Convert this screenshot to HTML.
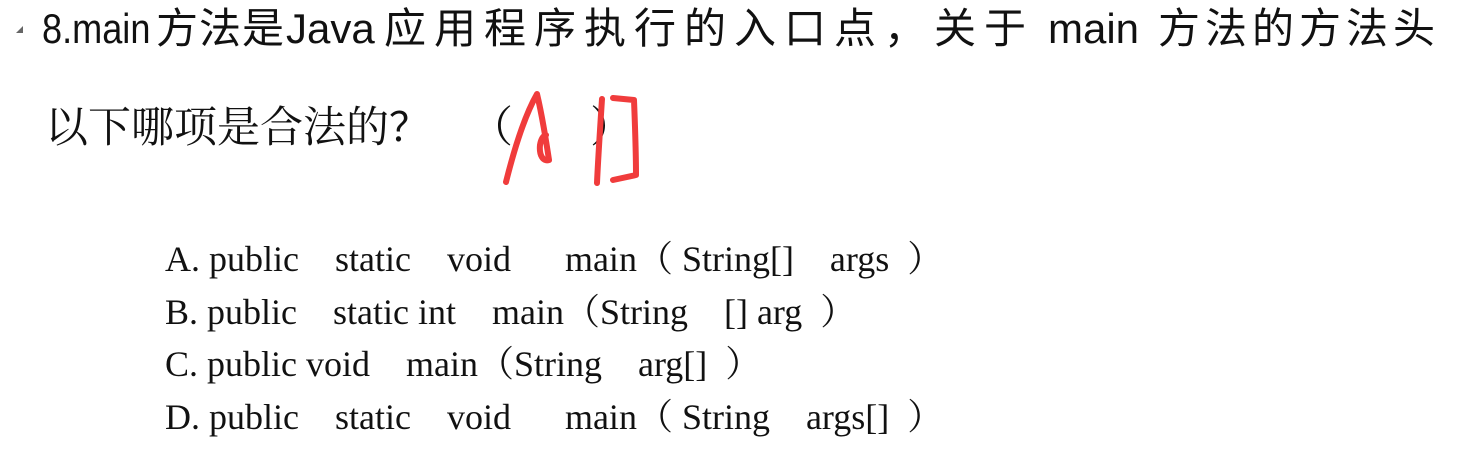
<!DOCTYPE html>
<html><head><meta charset="utf-8"><style>
body{margin:0;width:1464px;height:459px;background:#fff;position:relative;overflow:hidden;color:#111}
.s{position:absolute;white-space:pre;line-height:1}
.l1{font-family:"Liberation Sans","Noto Sans CJK SC",sans-serif;font-size:42px;top:8px}
.l2{font-family:"Liberation Serif","Noto Serif CJK SC",serif;font-size:43px;top:107px;letter-spacing:0px}
.op{font-family:"Liberation Serif","Noto Serif CJK SC",serif;font-size:36px;left:165px}
</style></head><body>
<div class="s" style="left:16px;top:26px;width:0;height:0;border-left:7px solid transparent;border-bottom:7px solid #666"></div>
<div class="s l1" style="left:42px;transform:scaleX(0.86);transform-origin:0 0">8.main</div>
<div class="s l1" style="left:156px;letter-spacing:1px">方法是</div>
<div class="s l1" style="left:286px">Java</div>
<div class="s l1" style="left:384px;letter-spacing:8px">应用程序执行的入口点，关于</div>
<div class="s l1" style="left:1048px">main</div>
<div class="s l1" style="left:1158px;letter-spacing:5px">方法的方法头</div>
<div class="s l2" style="left:45px">以下哪项是合法的</div>
<div class="s l2" style="left:389px;font-family:'Noto Sans CJK SC','WenQuanYi Zen Hei',sans-serif;top:104px;font-size:40px">？</div>
<div class="s l2" style="left:470px">（</div>
<div class="s l2" style="left:590px">）</div>
<div class="s op" style="top:241px">A. public    static    void      main（ String[]    args  ）</div>
<div class="s op" style="top:294px">B. public    static int    main（String    [] arg  ）</div>
<div class="s op" style="top:346px">C. public void    main（String    arg[]  ）</div>
<div class="s op" style="top:399px">D. public    static    void      main（ String    args[]  ）</div>
<svg class="s" style="left:0;top:0" width="1464" height="459" fill="none" stroke="#f03c3c" stroke-width="6" stroke-linecap="round" stroke-linejoin="round">
<path d="M506 182 C514 150 525 115 537 94 C542 115 546 140 549 160 C543 162 539 155 540 145 C541 139 543 136 546 135"/>
<path d="M602 99 C600 130 598 160 597 183"/>
<path d="M613 98 L634 100 C635 125 636 150 636 175 L613 180"/>
</svg>
</body></html>
